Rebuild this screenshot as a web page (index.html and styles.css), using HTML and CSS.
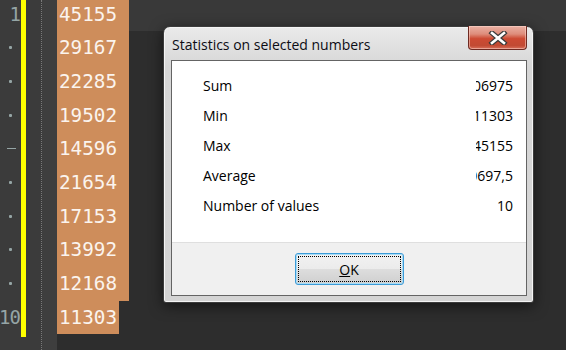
FILE: index.html
```html
<!doctype html>
<html lang="en">
<head>
    <meta charset="UTF-8">
    <title>Statistics on selected numbers</title>
    <link rel="stylesheet" href="styles.css">
</head>
<body>
    <div class="editor">
        <div class="gutter">
            <div class="line-numbers">
                <div class="num">1</div>
                <div class="num"><span class="dot"></span></div>
                <div class="num"><span class="dot"></span></div>
                <div class="num"><span class="dot"></span></div>
                <div class="num"><span class="dash"></span></div>
                <div class="num"><span class="dot"></span></div>
                <div class="num"><span class="dot"></span></div>
                <div class="num"><span class="dot"></span></div>
                <div class="num"><span class="dot"></span></div>
                <div class="num">10</div>
            </div>
            <div class="change-bar"></div>
            <div class="fold-area"></div>
        </div>
        <div class="margin"></div>
        <div class="code">
            <div class="line current"><span class="sel">45155</span></div>
            <div class="line"><span class="sel">29167</span></div>
            <div class="line"><span class="sel">22285</span></div>
            <div class="line"><span class="sel">19502</span></div>
            <div class="line"><span class="sel">14596</span></div>
            <div class="line"><span class="sel">21654</span></div>
            <div class="line"><span class="sel">17153</span></div>
            <div class="line"><span class="sel">13992</span></div>
            <div class="line"><span class="sel">12168</span></div>
            <div class="line"><span class="sel last">11303</span></div>
        </div>
    </div>

    <div class="dialog">
        <div class="titlebar">
            <span class="title">Statistics on selected numbers</span>
            <button class="close" aria-label="Close">
                <svg width="20" height="14" viewBox="0 0 20 14">
                    <path d="M4 2 L16 12 M16 2 L4 12" stroke="#3a3a3a" stroke-width="5" stroke-linecap="square"/>
                    <path d="M4 2 L16 12 M16 2 L4 12" stroke="#ffffff" stroke-width="2.6" stroke-linecap="square"/>
                </svg>
            </button>
        </div>
        <div class="client">
            <div class="stats">
                <div class="row"><span class="label">Sum</span><span class="value"><span>206975</span></span></div>
                <div class="row"><span class="label">Min</span><span class="value"><span>11303</span></span></div>
                <div class="row"><span class="label">Max</span><span class="value"><span>45155</span></span></div>
                <div class="row"><span class="label">Average</span><span class="value"><span>20697,5</span></span></div>
                <div class="row"><span class="label">Number of values</span><span class="value"><span>10</span></span></div>
            </div>
            <div class="buttons">
                <button class="ok"><span class="focus"><u>O</u>K</span></button>
            </div>
        </div>
    </div>
</body>
</html>
```

FILE: styles.css
```css
body {
    margin: 0;
    width: 566px;
    height: 350px;
    overflow: hidden;
    background-color: #2d2d2d;
    position: relative;
}

/* Editor */

.editor {
    display: flex;
    height: 350px;
    font-family: 'DejaVu Sans Mono', monospace;
}

.gutter {
    display: flex;
    width: 41px;
    background-color: #3b3b3b;
    border-right: 1px dotted #7a7a7a;
}

.line-numbers {
    width: 20px;
    margin-top: -2.7px;
    color: #95a5a5;
    font-size: 19px;
}

.num {
    height: 33.7px;
    display: flex;
    align-items: center;
    justify-content: flex-end;
    letter-spacing: -1px;
}

.dot {
    width: 3px;
    height: 3px;
    margin-right: 8px;
    background-color: #95a5a5;
    border-radius: 1px;
}

.dash {
    width: 9px;
    height: 1px;
    margin-right: 4px;
    background-color: #95a5a5;
}

.change-bar {
    width: 5px;
    margin-left: 1px;
    height: 337px;
    background-color: #ffff00;
}

.fold-area {
    flex-grow: 1;
}

.margin {
    width: 15px;
    background-color: #3e3e3e;
}

.code {
    flex-grow: 1;
    margin-top: -2.7px;
}

.line {
    height: 33.7px;
    display: flex;
}

.line.current {
    background-color: #393939;
}

.sel {
    display: flex;
    align-items: center;
    width: 70px;
    padding-left: 2px;
    background-color: #ce8d5b;
    color: #fbf4ee;
    font-size: 19.3px;
}

.sel.last {
    width: 60px;
}

/* Dialog */

.dialog {
    position: absolute;
    left: 163px;
    top: 26px;
    width: 369px;
    height: 275px;
    display: flex;
    flex-direction: column;
    border: 1px solid #3c3c3c;
    border-radius: 7px 7px 3px 3px;
    background: linear-gradient(#eaeaea, #d6d6d6 40px, #d4d4d4);
    box-shadow: inset 0 0 0 1px #f4f4f4, 0 3px 14px rgba(0, 0, 0, 0.55);
    font-family: 'Open Sans', sans-serif;
    color: #000;
}

.titlebar {
    height: 33px;
    display: flex;
    align-items: center;
    padding-left: 8px;
    position: relative;
}

.title {
    font-size: 14px;
    margin-top: 1px;
    color: #0c0c14;
}

.close {
    position: absolute;
    top: -1px;
    right: 6px;
    width: 59px;
    height: 24px;
    padding: 0;
    border: 1px solid #6e2a22;
    border-top: none;
    border-radius: 0 0 4px 4px;
    background: linear-gradient(#eab1a4, #de8d7b 35%, #cd4a33 55%, #c24a33 85%, #d8705c);
    box-shadow: inset 0 0 0 1px rgba(255, 220, 210, 0.5);
    display: flex;
    align-items: center;
    justify-content: center;
}

.client {
    flex-grow: 1;
    margin: 0 6px 6px 7px;
    border: 1px solid #646464;
    display: flex;
    flex-direction: column;
    background-color: #f0f0f0;
}

.stats {
    height: 172px;
    padding-top: 9px;
    background-color: #fff;
    border-bottom: 1px solid #dfdfdf;
}

.row {
    height: 30px;
    display: flex;
    align-items: center;
    justify-content: space-between;
    padding: 0 13px 0 31px;
    font-size: 14px;
}

.value {
    width: 37px;
    overflow: hidden;
    display: flex;
    justify-content: flex-end;
    white-space: nowrap;
}

.buttons {
    flex-grow: 1;
    display: flex;
    align-items: center;
    justify-content: center;
}

.ok {
    width: 109px;
    height: 32px;
    padding: 2px;
    border: 1px solid #3c9bd7;
    border-radius: 3px;
    background: linear-gradient(#f2f2f2, #ebebeb 50%, #dddddd 51%, #cfcfcf);
    box-shadow: inset 0 0 0 1px #a8dcf6;
    font-family: 'Open Sans', sans-serif;
    font-size: 14px;
    color: #000;
    display: flex;
}

.focus {
    flex-grow: 1;
    display: flex;
    align-items: center;
    justify-content: center;
    border: 1px dotted #000;
}
```
